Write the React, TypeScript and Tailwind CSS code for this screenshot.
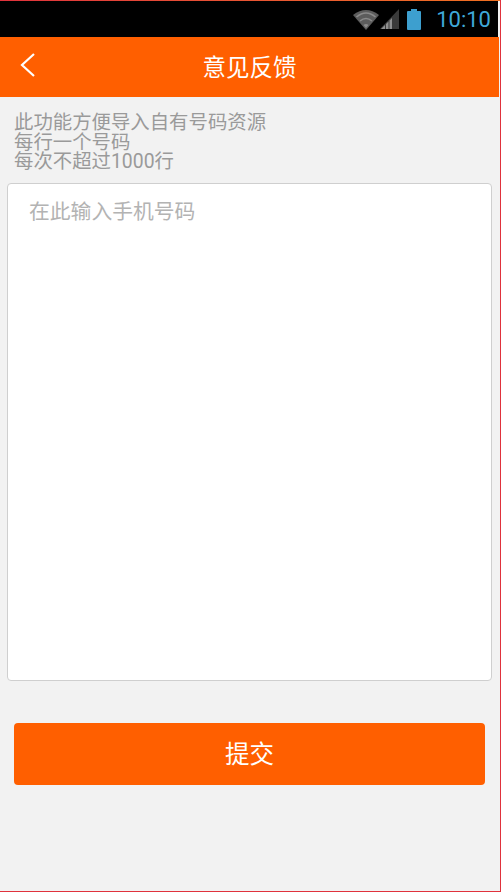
export default function App() {
  return (
    <div className="w-[501px] h-[892px] overflow-hidden flex flex-col bg-[#f2f2f2] border-r border-b border-[#e0323c] font-['Roboto','Noto_Sans_CJK_SC',sans-serif]">
      <div className="h-px shrink-0 bg-gradient-to-r from-[#e0323c] to-[#f07020]" />
      <div className="h-[36px] shrink-0 bg-black mr-[2px] flex items-center justify-end pr-[7px]">
        <svg width="26" height="21" viewBox="0 0 26 21" className="blur-[0.4px]">
          <path d="M0 6 Q13 -4 26 6 L13 21 Z" fill="#5c5c5c" />
          <path d="M3.5 8 Q13 0 22.5 8" fill="none" stroke="#8a8a8a" strokeWidth="1.6" />
          <path d="M7 12 Q13 7 19 12" fill="none" stroke="#8a8a8a" strokeWidth="1.6" />
          <path d="M10.5 16 Q13 14 15.5 16 L13 19 Z" fill="#8a8a8a" />
        </svg>
        <svg width="19" height="20" viewBox="0 0 19 20" className="ml-[1px] blur-[0.4px]">
          <path d="M0 20 L19 0 L19 20 Z" fill="#3a3a3a" />
          <path d="M1 20 L5 16 V20 Z M6 20 V15 L8.5 12.5 V20 Z M9.5 20 V11.5 L12 9 V20 Z" fill="#8f8f8f" />
        </svg>
        <svg width="16" height="21" viewBox="0 0 16 21" className="ml-[7px] blur-[0.3px]">
          <path d="M5 0 H11 V2 H14 Q15 2 15 3 V20 Q15 21 14 21 H2 Q1 21 1 20 V3 Q1 2 2 2 H5 Z" fill="#3d9fcf" />
        </svg>
        <span className="ml-[14px] text-[22px] leading-none text-[#3fa9d8] relative top-[1px]">10:10</span>
      </div>
      <div className="h-[60px] shrink-0 bg-[#ff5f00] mr-px relative flex items-center justify-center pt-[4px]">
        <svg width="16" height="26" viewBox="0 0 16 26" className="absolute left-[19px] top-[15px]">
          <path d="M15 2 L3 13 L15 24" fill="none" stroke="#fff" strokeWidth="2.2" />
        </svg>
        <span className="text-[23.5px] text-white">意见反馈</span>
      </div>
      <div className="px-[14px] pt-[16px] text-[19.4px] leading-[19.5px] text-[#9a9a9a]">
        <p>此功能方便导入自有号码资源</p>
        <p>每行一个号码</p>
        <p>每次不超过1000行</p>
      </div>
      <div className="ml-[7px] mr-[8px] mt-[11px] h-[498px] shrink-0 rounded-[4px] bg-white border border-[#cfcfcf] px-[21px] pt-[16px] text-[20.8px] leading-[24px] text-[#b3b3b3]">
        在此输入手机号码
      </div>
      <button className="ml-[14px] mr-[15px] mt-[42px] h-[62px] shrink-0 rounded-[4px] bg-[#ff5f00] text-white text-[24.5px] pt-[4px]">提交</button>
    </div>
  );
}
